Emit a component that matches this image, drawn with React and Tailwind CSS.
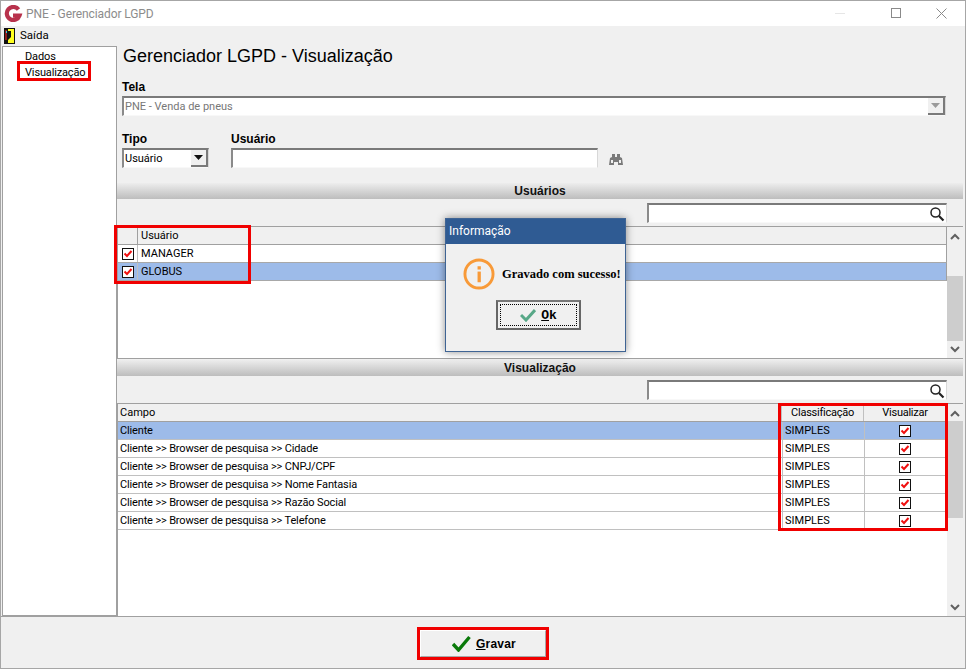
import React from "react";

const bold = "font-['Liberation_Sans',sans-serif] font-bold";

function Check() {
  return (
    <svg width="12" height="12" viewBox="0 0 12 12" className="block">
      <rect x="0.5" y="0.5" width="11" height="11" fill="#fff" stroke="#111" />
      <path d="M2.5 5.5 L5 8 L9.5 3" fill="none" stroke="#f01010" strokeWidth="2" />
    </svg>
  );
}

function Lupa() {
  return (
    <svg width="16" height="16" viewBox="0 0 16 16">
      <circle cx="6.5" cy="6.5" r="4.5" fill="none" stroke="#222" strokeWidth="1.5" />
      <path d="M10 10 L14.5 14.5" stroke="#222" strokeWidth="2.2" />
    </svg>
  );
}

function Sunken({ className, children }) {
  return (
    <div className={"border-2 border-r border-b border-t-[#7a7a7a] border-l-[#8a8a8a] border-r-[#d8d8d8] border-b-[#f8f8f8] bg-white box-border flex items-center " + className}>
      {children}
    </div>
  );
}

function DropButton({ color }) {
  return (
    <span className="w-[17px] h-[17px] bg-[#f0f0f0] border-r-2 border-b-2 border-[#7a7a7a] box-border flex items-center justify-center">
      <svg width="9" height="5" viewBox="0 0 9 5"><path d="M0 0 H9 L4.5 5 Z" fill={color} /></svg>
    </span>
  );
}

function SearchBox() {
  return (
    <div className="h-[27px] pt-1 flex justify-end pr-[16px] shrink-0">
      <Sunken className="w-[300px] h-[20px] justify-end pr-[1px]">
        <Lupa />
      </Sunken>
    </div>
  );
}

function Bar({ children }) {
  return (
    <div className={"h-[16px] shrink-0 bg-gradient-to-b from-[#ededed] to-[#bdbdbd] flex items-center justify-center text-[12px] text-[#111] " + bold}>
      {children}
    </div>
  );
}

function Scroll({ top, bottom }) {
  return (
    <div className="w-[16px] shrink-0 flex flex-col bg-[#f0f0f0] items-center">
      <svg width="16" height="17" viewBox="0 0 16 17" className="shrink-0"><path d="M4 12 L8 8 L12 12" fill="none" stroke="#606060" strokeWidth="2" /></svg>
      <div className="flex-1 w-full flex flex-col">
        <div className={"shrink-0 " + top} />
        <div className="flex-1 bg-[#cdcdcd]" />
        <div className={"shrink-0 " + bottom} />
      </div>
      <svg width="16" height="17" viewBox="0 0 16 17" className="shrink-0"><path d="M4 6 L8 10 L12 6" fill="none" stroke="#606060" strokeWidth="2" /></svg>
    </div>
  );
}

const campos = [
  "Cliente",
  "Cliente >> Browser de pesquisa >> Cidade",
  "Cliente >> Browser de pesquisa >> CNPJ/CPF",
  "Cliente >> Browser de pesquisa >> Nome Fantasia",
  "Cliente >> Browser de pesquisa >> Razão Social",
  "Cliente >> Browser de pesquisa >> Telefone",
];

export default function App() {
  return (
    <div className="relative w-[966px] h-[669px] box-border border border-[#a6a6a6] bg-[#f0f0f0] flex flex-col overflow-hidden font-['Roboto',sans-serif] text-[11px] leading-none text-black">
      {/* title bar */}
      <div className="h-[25px] bg-white flex items-center shrink-0 pl-[3px]">
        <svg width="19" height="18" viewBox="0 0 19 18" className="shrink-0">
          <path d="M14.5 4.5 A6.5 6.5 0 1 0 15.5 10.5 L9 10.5" fill="none" stroke="#b8324c" strokeWidth="4.2" />
        </svg>
        <span className="ml-[3px] text-[12px] tracking-[-0.1px] text-[#8c8c8c]">PNE - Gerenciador LGPD</span>
        <div className="ml-auto w-[10px] h-[1px] bg-[#e6e6e6] mr-[46px]" />
        <svg width="11" height="11" viewBox="0 0 11 11" className="mr-[34px]"><rect x="0.5" y="0.5" width="9" height="9" fill="none" stroke="#8a8a8a" /></svg>
        <svg width="11" height="11" viewBox="0 0 11 11" className="mr-[18px]"><path d="M0.5 0.5 L10.5 10.5 M10.5 0.5 L0.5 10.5" stroke="#8a8a8a" /></svg>
      </div>
      {/* menu */}
      <div className="h-[20px] flex items-center shrink-0 pl-[3px]">
        <svg width="11" height="16" viewBox="0 0 11 16" className="shrink-0">
          <rect width="11" height="16" fill="#111" />
          <rect x="4" y="1" width="6" height="14" fill="#ffff20" />
          <path d="M1 1 H4 V3 H7 V9 L4 12 H1 Z" fill="#111" />
          <rect x="1" y="2" width="2" height="10" fill="#901818" />
          <rect x="2" y="3" width="1" height="2" fill="#30d0e0" />
        </svg>
        <span className="ml-[5px] text-[11.5px]">Saída</span>
      </div>
      {/* body */}
      <div className="flex-1 min-h-0 flex pl-[1px] pr-[2px]">
        <div className="w-[115px] shrink-0 box-border border border-[#a0a0a0] bg-white pt-[2px] pl-[22px]">
          <div className="h-[15px] flex items-center tracking-[-0.1px]">Dados</div>
          <div className="h-[17px] flex items-center tracking-[-0.15px]">Visualização</div>
        </div>
        <div className="flex-1 min-w-0 flex flex-col">
          <div className="h-[137px] shrink-0 pl-[5px] pr-[17px]">
            <div className="h-[34px] text-[18px] leading-[20px] pl-[1px] font-['Liberation_Sans',sans-serif]">Gerenciador LGPD - Visualização</div>
            <div className={"h-[14px] text-[12px] leading-[14px] " + bold}>Tela</div>
            <Sunken className="h-[20px] w-full mt-[2px] pl-[1px] text-[#777] justify-between">
              <span>PNE - Venda de pneus</span>
              <DropButton color="#9a9a9a" />
            </Sunken>
            <div className="flex mt-[16px]">
              <div className="w-[87px]">
                <div className={"h-[14px] text-[12px] leading-[14px] " + bold}>Tipo</div>
                <Sunken className="h-[20px] mt-[2px] pl-[1px] justify-between border-r-[#7a7a7a]">
                  <span>Usuário</span>
                  <DropButton color="#111" />
                </Sunken>
              </div>
              <div className="w-[367px] ml-[22px]">
                <div className={"h-[14px] text-[12px] leading-[14px] " + bold}>Usuário</div>
                <Sunken className="h-[20px] mt-[2px]" />
              </div>
              <svg width="14" height="12" viewBox="0 0 14 12" className="mt-[22px] ml-[11px]">
                <path d="M3 0 H6 V3 H8 V0 H11 V3 L13 4 L14 11 H9 V8 H5 V11 H0 L1 4 L3 3 Z" fill="#7a7a7a" />
                <rect x="2" y="6" width="2" height="3" fill="#f0f0f0" />
                <rect x="10" y="6" width="2" height="3" fill="#f0f0f0" />
              </svg>
            </div>
          </div>
          <Bar>Usuários</Bar>
          <SearchBox />
          {/* users grid */}
          <div className="h-[133px] shrink-0 box-border border border-[#a0a0a0] border-r-0 bg-white flex">
            <div className="flex-1 min-w-0 flex flex-col">
              <div className="h-[17px] shrink-0 bg-[#f0f0f0] border-b border-r border-[#a0a0a0] flex box-content">
                <div className="w-[20px] border-r border-[#a0a0a0] shrink-0" />
                <div className="pl-[3px] flex items-center">Usuário</div>
              </div>
              {["MANAGER", "GLOBUS"].map((u, i) => (
                <div key={u} className={"h-[17px] box-content shrink-0 border-b border-[#a8a8a8] border-r border-r-[#a0a0a0] flex " + (i === 1 ? "bg-[#9dbbe9]" : "")}>
                  <div className="w-[20px] border-r border-[#c0c0c0] shrink-0 flex items-center justify-center"><Check /></div>
                  <div className="pl-[3px] flex items-center">{u}</div>
                </div>
              ))}
            </div>
            <Scroll top="h-[32px]" bottom="h-0" />
          </div>
          <div className="h-[1px] shrink-0" />
          <Bar>Visualização</Bar>
          <SearchBox />
          {/* fields grid */}
          <div className="flex-1 min-h-0 box-border border border-[#a0a0a0] border-r-0 border-b-0 bg-white flex">
            <div className="flex-1 min-w-0 flex flex-col">
              <div className="h-[17px] box-content shrink-0 bg-[#f0f0f0] border-b border-r border-[#a0a0a0] flex">
                <div className="flex-1 pl-[2px] flex items-center">Campo</div>
                <div className="w-[82px] box-border border-l border-[#c0c0c0] flex items-center justify-center tracking-[-0.25px]">Classificação</div>
                <div className="w-[83px] box-border border-l border-[#c0c0c0] flex items-center justify-center tracking-[-0.25px]">Visualizar</div>
              </div>
              {campos.map((c, i) => (
                <div key={c} className={"h-[17px] box-content shrink-0 border-b border-[#c0c0c0] flex " + (i === 0 ? "bg-[#9dbbe9]" : "")}>
                  <div className="flex-1 pl-[2px] flex items-center tracking-[-0.15px]">{c}</div>
                  <div className="w-[82px] box-border border-l border-[#c0c0c0] pl-[2px] flex items-center">SIMPLES</div>
                  <div className="w-[83px] box-border border-l border-[#c0c0c0] pr-[2px] flex items-center justify-center"><Check /></div>
                </div>
              ))}
            </div>
            <Scroll top="h-0" bottom="h-[81px]" />
          </div>
        </div>
      </div>
      {/* footer */}
      <div className={"h-[52px] shrink-0 border-t border-[#a0a0a0] box-border flex justify-center pt-[10px] " + bold}>
        <div className="w-[132px] h-[33px] box-border p-[3px] ml-[-1px]">
          <div className="w-full h-full box-border border border-t-white border-l-white border-r-[#a8a8a8] border-b-[#a8a8a8] flex items-center justify-center gap-[5px] text-[12px] tracking-[0.2px] pl-[3px]">
            <svg width="19" height="17" viewBox="0 0 19 17"><path d="M1 9 L6.5 15 L17.5 2" fill="none" stroke="#0a7a0a" strokeWidth="3.4" /></svg>
            <span className="pt-[1px]"><u>G</u>ravar</span>
          </div>
        </div>
      </div>

      {/* red annotation frames */}
      <div className="absolute left-[16px] top-[60px] w-[74px] h-[20px] border-[3px] border-[#f00000]" />
      <div className="absolute left-[113px] top-[224px] w-[137px] h-[59px] border-[3px] border-[#f00000]" />
      <div className="absolute left-[777px] top-[402px] w-[170px] h-[128px] border-[3px] border-[#f00000]" />
      <div className="absolute left-[416px] top-[626px] w-[132px] h-[33px] border-[3px] border-[#f00000]" />

      {/* dialog */}
      <div className="absolute left-[444px] top-[217px] w-[181px] h-[134px] box-border border border-[#3f6494] bg-[#f0f0f0] shadow-[0_0_8px_rgba(0,0,0,0.45)] flex flex-col">
        <div className="h-[25px] shrink-0 bg-[#2f5b93] text-white flex items-center pl-[3px] pb-[2px] text-[12px]">Informação</div>
        <div className="flex items-center pl-[17px] mt-[14px]">
          <svg width="32" height="32" viewBox="0 0 33 33" className="shrink-0">
            <circle cx="16.5" cy="16.5" r="14.5" fill="none" stroke="#f89a38" strokeWidth="3" />
            <rect x="15" y="14" width="3.4" height="11" fill="#f89a38" />
            <rect x="15" y="8.5" width="3.4" height="3.4" fill="#f89a38" />
          </svg>
          <span className="ml-[7px] font-bold text-[12.5px] whitespace-nowrap font-['Liberation_Serif',serif]">Gravado com sucesso!</span>
        </div>
        <div className="mt-[10px] ml-[50px] w-[85px] h-[30px] box-border border-2 border-[#666] border-t-[#777] bg-[#f0f0f0] p-[2px]">
          <div className="w-full h-full border border-dotted border-black flex items-center justify-center gap-[5px] font-bold">
            <svg width="16" height="14" viewBox="0 0 16 14"><path d="M1 7 L6 12 L15 2" fill="none" stroke="#58a888" strokeWidth="3" /></svg>
            <span className="font-['Liberation_Mono',monospace] text-[13px]"><u>O</u>k</span>
          </div>
        </div>
      </div>
    </div>
  );
}
